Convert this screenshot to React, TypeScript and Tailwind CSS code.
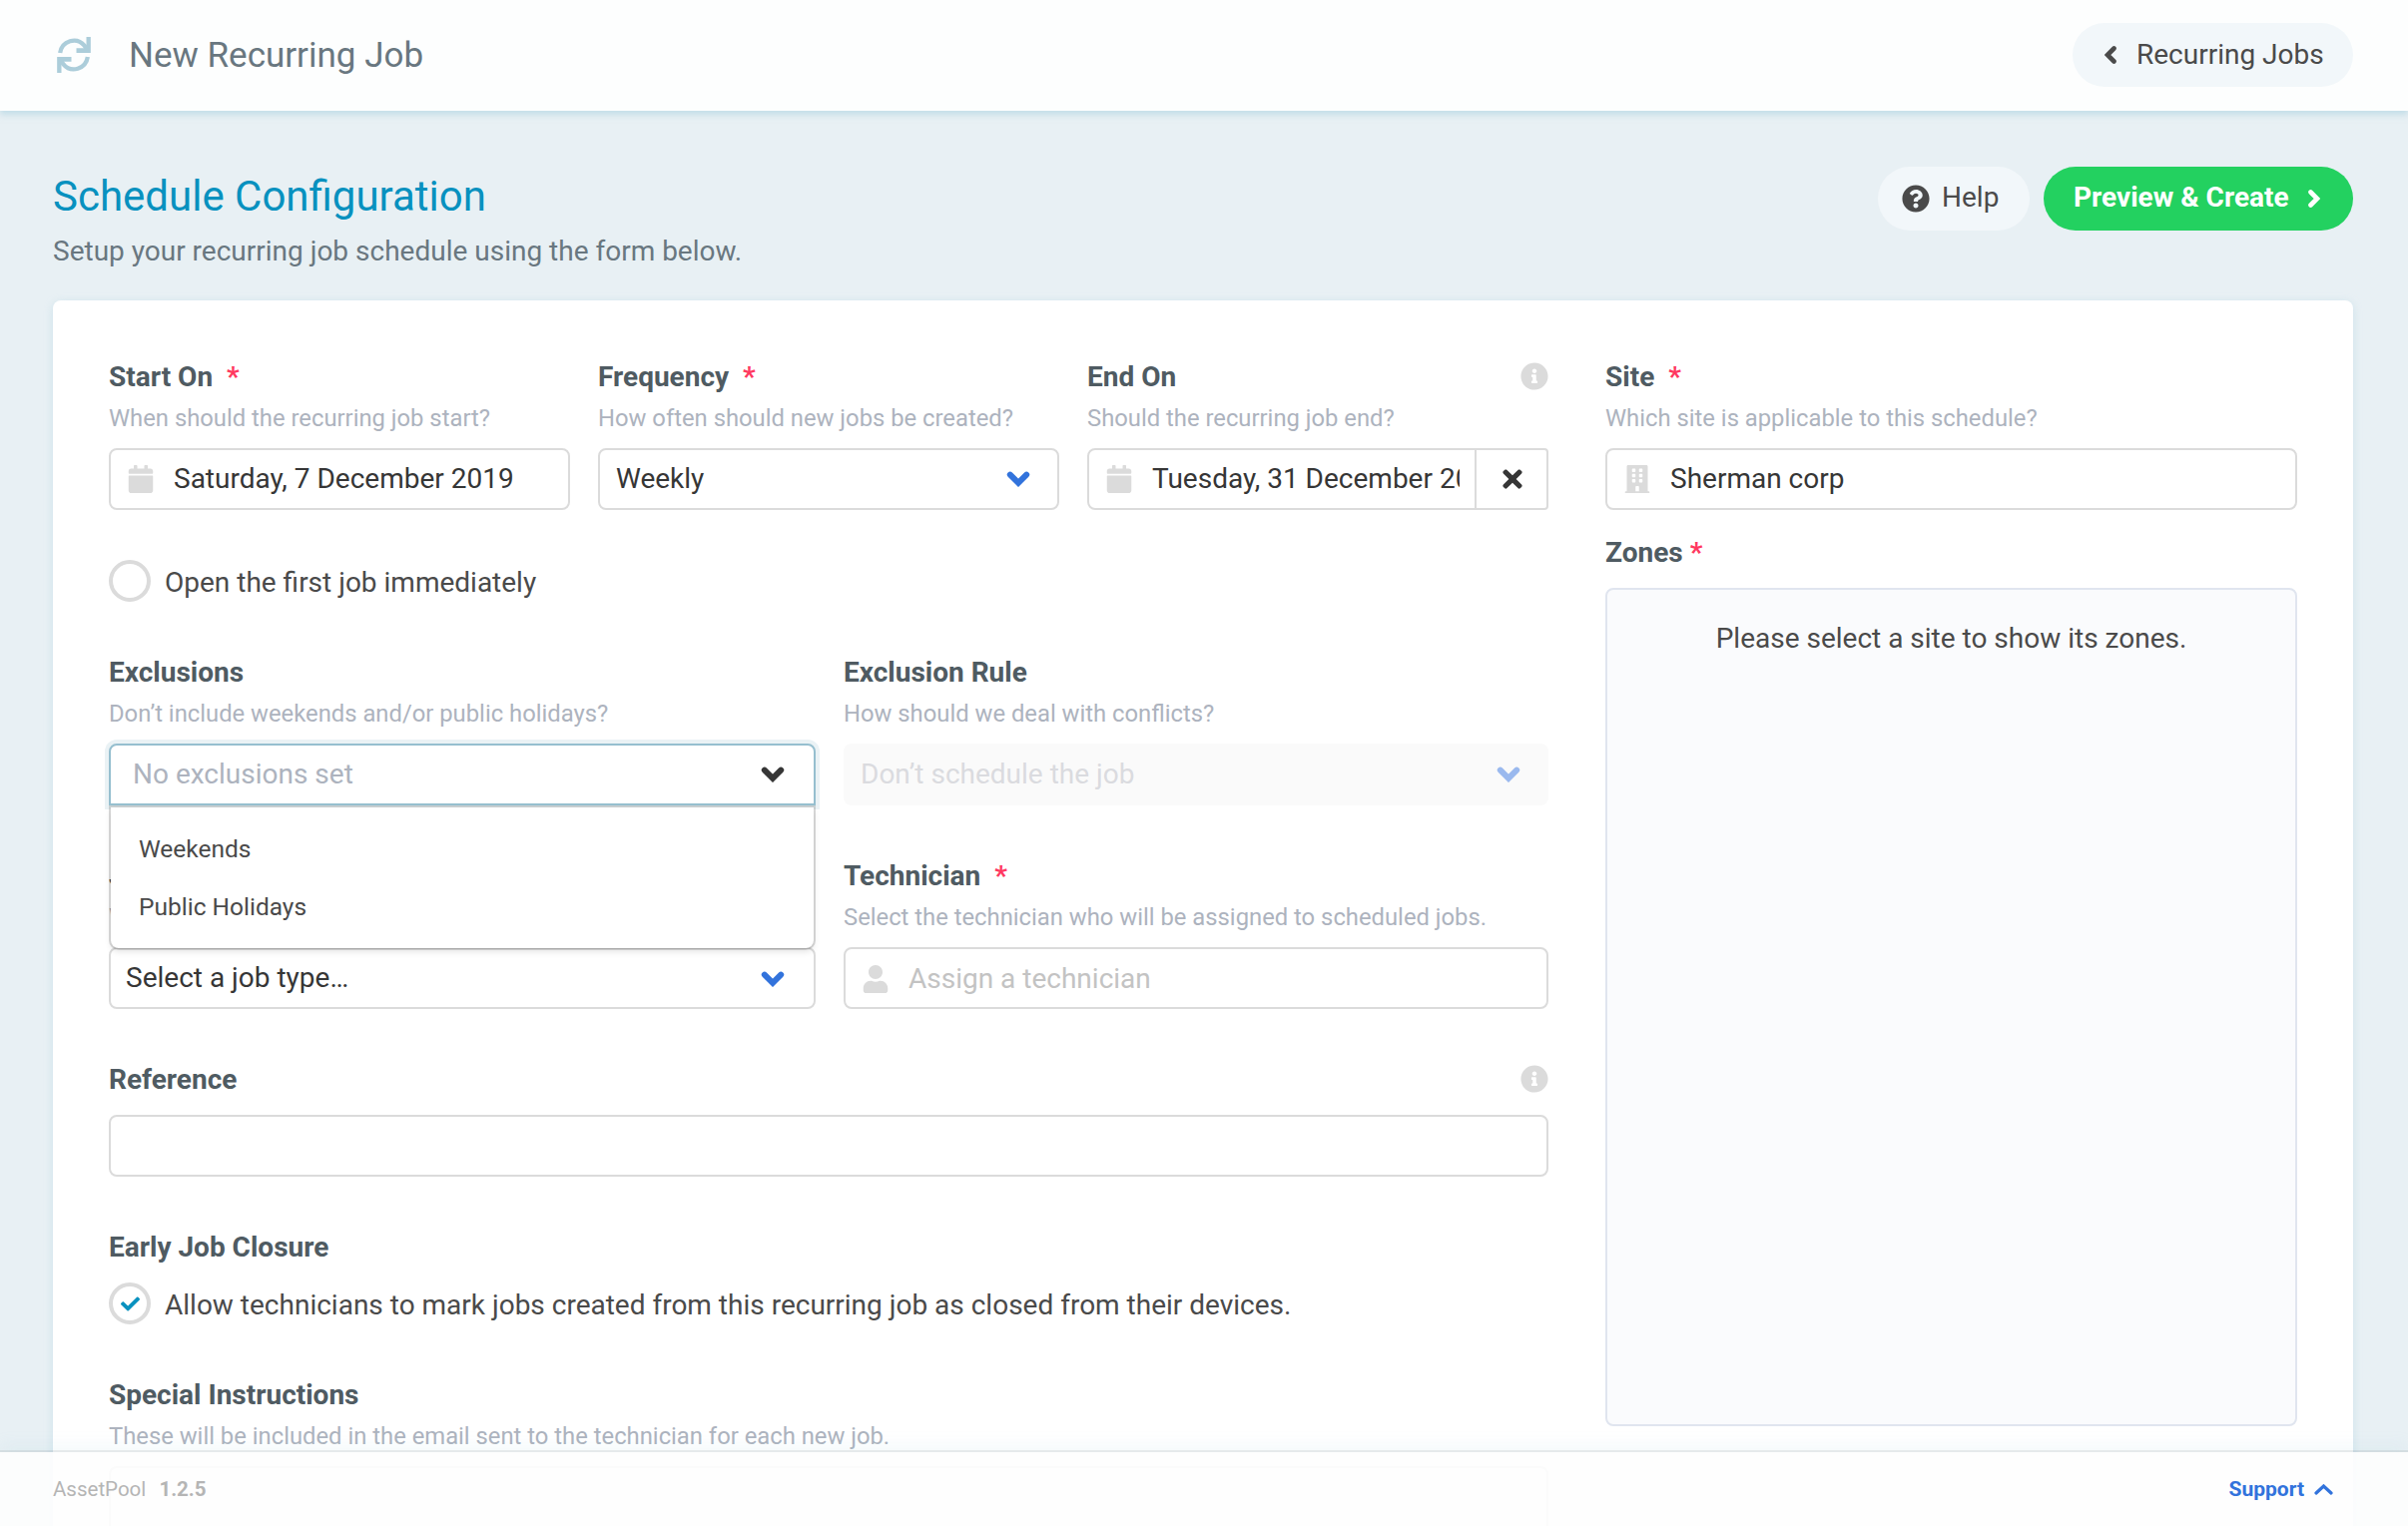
import { useState } from "react";
import type { ReactNode } from "react";
import { FaBuilding, FaCalendar, FaCheck, FaInfoCircle, FaQuestionCircle, FaTimes, FaUser } from "react-icons/fa";

const exclusions = ["Weekends", "Public Holidays"];

const control = "flex h-[62px] items-center rounded-lg border-2 border-[#dbdbdb] bg-white text-[#363636]";

function SyncIcon() {
  return (
    <svg viewBox="0 0 101 108" className="h-9 w-[34px] text-[#accdda]" fill="none">
      <path d="M9 48A42 44 0 0 1 82 26L90 38" stroke="currentColor" strokeWidth="13" />
      <path d="M88 0h13v48H58V34h30z" fill="currentColor" />
      <path d="M92 60A42 44 0 0 1 19 82L11 70" stroke="currentColor" strokeWidth="13" />
      <path d="M13 108H0V60h43v14H13z" fill="currentColor" />
    </svg>
  );
}

function Chevron({ className }: { className?: string }) {
  return (
    <svg viewBox="0 0 12 18" className={`h-[18px] w-3 shrink-0 ${className ?? ""}`} fill="none">
      <path d="M9.5 2.5 3 9l6.500 6.500" stroke="currentColor" strokeWidth="4.600" strokeLinecap="round" />
    </svg>
  );
}

function Arrow({ className }: { className: string }) {
  return (
    <svg viewBox="0 0 24 16" className={`h-4 w-6 shrink-0 ${className}`} fill="none">
      <path d="M3.800 3.600 12 11.800l8.200-8.200" stroke="currentColor" strokeWidth="6" strokeLinecap="round" />
    </svg>
  );
}

function Label({ text, required, info }: { text: string; required?: boolean; info?: boolean }) {
  return (
    <div className="flex h-[42px] items-center justify-between font-bold text-[#4f5b62]">
      <span>
        {text}
        {required && <span className="ml-3.5 text-[#ff3860]">*</span>}
      </span>
      {info && <FaInfoCircle className="mb-0.5 text-[#dbdbdb]" />}
    </div>
  );
}

function Field({ label, required, info, help, children }: { label: string; required?: boolean; info?: boolean; help?: string; children: ReactNode }) {
  return (
    <div className="min-w-0">
      <Label text={label} required={required} info={info} />
      {help && <p className="mt-0.5 h-9 text-[23.8px] leading-9 whitespace-nowrap text-[#adb3be]">{help}</p>}
      <div className={help ? "mt-3" : "mt-3.5"}>{children}</div>
    </div>
  );
}

function Check({ checked, onClick, children }: { checked: boolean; onClick: () => void; children: ReactNode }) {
  return (
    <div className="flex h-[42px] cursor-pointer items-center gap-3.5" onClick={onClick}>
      <span className="flex size-[42px] items-center justify-center rounded-full border-4 border-[#dbdbdb] bg-white">
        {checked && <FaCheck className="size-[19px] text-[#0891bf]" />}
      </span>
      <span className="pt-[3px] text-[#4a4a4a]">{children}</span>
    </div>
  );
}

export default function App() {
  const [open, setOpen] = useState(true);
  const [openFirst, setOpenFirst] = useState(false);
  const [earlyClose, setEarlyClose] = useState(true);

  return (
    <div className="relative h-[1529px] w-[2412px] overflow-hidden bg-[#e8f0f4] font-['Roboto',sans-serif] text-[28px] leading-[42px] text-[#4a4a4a]">
      <header className="relative flex h-[111px] items-center justify-between bg-[#fdfefe] pr-[55px] pb-px pl-[57px] shadow-[0_4px_6px_rgba(160,205,222,0.5)]">
        <div className="flex items-center gap-[38px]">
          <SyncIcon />
          <h1 className="pt-px text-[35px] text-[#697780]">New Recurring Job</h1>
        </div>
        <button className="flex h-16 w-[281px] items-center gap-5 rounded-full bg-[#f2f7fa] pl-8">
          <Chevron />
          <span>Recurring Jobs</span>
        </button>
      </header>

      <main className="px-[53px] pt-14">
        <div className="flex h-[134px] items-start justify-between pr-[2px]">
          <div className="pt-1.5">
            <h2 className="text-[42px] leading-[48px] text-[#0891bf]">Schedule Configuration</h2>
            <p className="mt-2.5 text-[#697780]">Setup your recurring job schedule using the form below.</p>
          </div>
          <div className="flex gap-3.5">
            <button className="flex h-16 w-[152px] items-center gap-3 rounded-full bg-[#f2f7fa] pl-6">
              <FaQuestionCircle />
              <span className="pb-[3px]">Help</span>
            </button>
            <button className="flex h-16 w-[310px] items-center gap-[19px] rounded-full bg-[#23d160] pl-[30px] font-bold text-white">
              <span className="pb-[3px]">Preview &amp; Create</span>
              <Chevron className="rotate-180" />
            </button>
          </div>
        </div>

        <div className="grid h-[1400px] w-[2304px] grid-cols-[1442px_693px] gap-[57px] rounded-lg bg-white py-14 pl-14 shadow-[0_2px_8px_rgba(160,205,222,0.4)]">
          <div className="flex flex-col gap-[50px]">
            <div className="grid grid-cols-3 gap-7">
              <Field label="Start On" required help="When should the recurring job start?">
                <div className={`${control} gap-[19px] pl-4`}>
                  <FaCalendar className="shrink-0 text-[#dbdbdb]" />
                  <span>Saturday, 7 December 2019</span>
                </div>
              </Field>
              <Field label="Frequency" required help="How often should new jobs be created?">
                <div className={`${control} justify-between pr-[27px] pl-4`}>
                  <span>Weekly</span>
                  <Arrow className="text-[#3273dc]" />
                </div>
              </Field>
              <Field label="End On" info help="Should the recurring job end?">
                <div className={`${control} rounded-r`}>
                  <div className="flex h-full w-[388px] items-center gap-[19px] border-r-2 border-[#dbdbdb] pr-[15px] pl-4">
                    <FaCalendar className="shrink-0 text-[#dbdbdb]" />
                    <span className="overflow-hidden whitespace-nowrap">Tuesday, 31 December 2019</span>
                  </div>
                  <button className="flex flex-1 justify-center pl-px">
                    <FaTimes />
                  </button>
                </div>
              </Field>
            </div>

            <Check checked={openFirst} onClick={() => setOpenFirst(!openFirst)}>
              Open the first job immediately
            </Check>

            <div className="grid grid-cols-[708px_706px] gap-7">
              <Field label="Exclusions" help="Don’t include weekends and/or public holidays?">
                <div className="relative">
                  <div
                    className={`flex h-[62px] items-center justify-between border-2 border-[#96bfcf] bg-white pr-[29px] pl-[22px] shadow-[0_0_0_4px_rgba(150,191,207,0.2)] ${open ? "rounded-t-lg" : "rounded-lg"}`}
                    onClick={() => setOpen(!open)}
                  >
                    <span className="text-[#adb3be]">No exclusions set</span>
                    <Arrow className="text-[#363636]" />
                  </div>
                  {open && (
                    <ul className="absolute inset-x-0.5 top-16 z-10 h-[141px] rounded-b-lg bg-white pt-[13px] text-[24.5px] shadow-[0_4px_6px_rgba(10,10,10,0.1),0_0_0_2px_rgba(10,10,10,0.15)]">
                      {exclusions.map((item) => (
                        <li key={item} className="flex h-[58px] items-center px-7">{item}</li>
                      ))}
                    </ul>
                  )}
                </div>
              </Field>
              <Field label="Exclusion Rule" help="How should we deal with conflicts?">
                <div className="flex h-[62px] items-center justify-between rounded-lg bg-[#fafafa] pr-7 pl-[17px]">
                  <span className="text-[#dadbdf]">Don’t schedule the job</span>
                  <Arrow className="text-[#9ab9ee]" />
                </div>
              </Field>
            </div>

            <div className="grid grid-cols-[708px_706px] gap-7">
              <Field label="Job Type" required help="What type of job should be created?">
                <div className={`${control} justify-between pr-[29px] pl-[15px]`}>
                  <span>Select a job type…</span>
                  <Arrow className="mt-0.5 text-[#3273dc]" />
                </div>
              </Field>
              <Field label="Technician" required help="Select the technician who will be assigned to scheduled jobs.">
                <div className={`${control} gap-[19px] pt-0.5 pl-4`}>
                  <FaUser className="shrink-0 text-[#dbdbdb]" />
                  <span className="text-[#c3c3c3]">Assign a technician</span>
                </div>
              </Field>
            </div>

            <Field label="Reference" info>
              <div className={control} />
            </Field>

            <Field label="Early Job Closure">
              <Check checked={earlyClose} onClick={() => setEarlyClose(!earlyClose)}>
                Allow technicians to mark jobs created from this recurring job as closed from their devices.
              </Check>
            </Field>

            <Field label="Special Instructions" help="These will be included in the email sent to the technician for each new job.">
              <div className="h-[200px] rounded-lg border-2 border-[#dbdbdb]" />
            </Field>
          </div>

          <div>
            <Field label="Site" required help="Which site is applicable to this schedule?">
              <div className={`${control} gap-[19px] pl-4`}>
                <FaBuilding className="shrink-0 text-[#dbdbdb]" />
                <span>Sherman corp</span>
              </div>
            </Field>
            <div className="mt-[22px] font-bold text-[#4f5b62]">
              Zones <span className="text-[#ff3860]">*</span>
            </div>
            <div className="mt-3.5 h-[840px] rounded-lg border-2 border-[#e0e5ef] bg-[#fafbfd] pt-7 text-center">
              Please select a site to show its zones.
            </div>
          </div>
        </div>
      </main>

      <footer className="absolute inset-x-0 bottom-0 z-20 flex h-[74px] items-center justify-between bg-[#fefefe]/90 pr-[75px] pl-[53px] text-[20.5px] text-[#b5b5b5] shadow-[0_-2px_0_rgba(10,10,10,0.07),0_-8px_14px_rgba(160,205,222,0.1)]">
        <div>
          AssetPool <b className="ml-2">1.2.5</b>
        </div>
        <div className="flex items-center gap-2.5 font-bold text-[#3273dc]">
          <span className="text-[21px]">Support</span>
          <svg viewBox="0 0 19 11" className="h-[11px] w-[19px]" fill="none">
            <path d="M2 9l7.500-7L17 9" stroke="currentColor" strokeWidth="3.200" strokeLinecap="round" />
          </svg>
        </div>
      </footer>
    </div>
  );
}
